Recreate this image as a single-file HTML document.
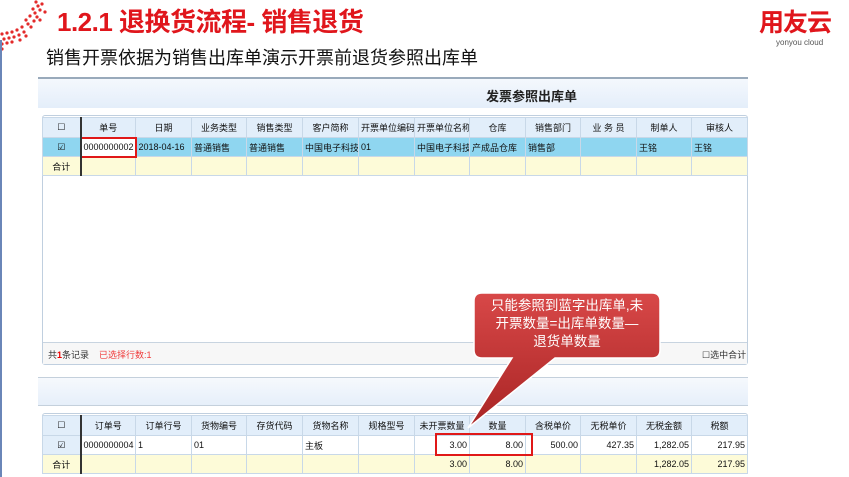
<!DOCTYPE html>
<html><head><meta charset="utf-8"><style>
*{margin:0;padding:0;box-sizing:border-box}
body{width:849px;height:477px;overflow:hidden;background:#fff;position:relative;font-family:"Liberation Sans","Noto Sans CJK SC",sans-serif}
.a{position:absolute}
table{border-collapse:collapse;table-layout:fixed;position:absolute;font-size:9px;font-family:"Liberation Sans","Noto Sans CJK SC",sans-serif}
td{border:1px solid #c8d8e8;height:19px;padding:0 2px;white-space:nowrap;overflow:hidden;color:#111}
tr.h td{background:#e2eefa;text-align:center;height:20px}
tr.d td{background:#8fd6f0}
tr.s td{background:#fdfbd8}
tr.w td{background:#fff}
td.c{text-align:center}
td.r{text-align:right}
td.l{border-right:2px solid #333}
</style></head><body>
<svg class="a" style="left:0;top:0" width="60" height="55">
<g fill="#e32a2a">
<circle cx="36" cy="2" r="1.6"/><circle cx="38" cy="6" r="1.6"/><circle cx="40" cy="10" r="1.6"/><circle cx="42" cy="4" r="1.6"/>
<circle cx="33" cy="9" r="1.6"/><circle cx="35" cy="13" r="1.6"/><circle cx="30" cy="16" r="1.6"/><circle cx="26" cy="20" r="1.6"/>
<circle cx="28" cy="24" r="1.6"/><circle cx="22" cy="27" r="1.6"/><circle cx="17" cy="30" r="1.6"/><circle cx="12" cy="32" r="1.6"/>
<circle cx="7" cy="33" r="1.6"/><circle cx="2" cy="34" r="1.6"/><circle cx="4" cy="39" r="1.6"/><circle cx="9" cy="38" r="1.6"/>
<circle cx="14" cy="37" r="1.6"/><circle cx="19" cy="35" r="1.6"/><circle cx="24" cy="32" r="1.6"/><circle cx="31" cy="27" r="1.6"/>
<circle cx="34" cy="21" r="1.6"/><circle cx="37" cy="17" r="1.6"/><circle cx="2" cy="44" r="1.6"/><circle cx="7" cy="43" r="1.6"/>
<circle cx="12" cy="42" r="1.6"/><circle cx="2" cy="49" r="1.6"/><circle cx="45" cy="12" r="1.6"/><circle cx="40" cy="20" r="1.6"/>
<circle cx="20" cy="40" r="1.6"/><circle cx="26" cy="36" r="1.6"/>
</g></svg>
<div class="a" style="left:0;top:40px;width:2px;height:437px;background:#6a86b8"></div>
<div class="a" style="left:57px;top:6px;font-size:26px;line-height:32px;font-weight:bold;color:#e0161c;letter-spacing:-0.5px">1.2.1 退换货流程- 销售退货</div>
<div class="a" style="left:759px;top:8px;font-size:25px;line-height:30px;font-weight:bold;color:#e0161c;letter-spacing:-1px">用友云</div>
<div class="a" style="left:776px;top:38px;font-size:8px;line-height:10px;color:#555">yonyou cloud</div>
<div class="a" style="left:46px;top:46px;font-size:18px;line-height:24px;color:#111">销售开票依据为销售出库单演示开票前退货参照出库单</div>
<div class="a" style="left:38px;top:77px;width:710px;height:2px;background:#9ab"></div>
<div class="a" style="left:38px;top:79px;width:710px;height:29px;background:linear-gradient(#f4f8fd,#e4eefa)"></div>
<div class="a" style="left:486px;top:86px;font-size:13px;font-weight:bold;color:#222">发票参照出库单</div>
<div class="a" style="left:42px;top:115px;width:706px;height:250px;border:1px solid #c0cfdf;border-radius:3px;background:#fff"></div>
<table style="left:42px;top:117px;width:705px">
<colgroup><col style="width:38px"><col style="width:55px"><col style="width:56px"><col style="width:55px"><col style="width:56px"><col style="width:56px"><col style="width:56px"><col style="width:55px"><col style="width:56px"><col style="width:55px"><col style="width:56px"><col style="width:55px"><col style="width:56px"></colgroup>
<tr class="h"><td class="l">☐</td><td>单号</td><td>日期</td><td>业务类型</td><td>销售类型</td><td>客户简称</td><td>开票单位编码</td><td>开票单位名称</td><td>仓库</td><td>销售部门</td><td>业 务 员</td><td>制单人</td><td>审核人</td></tr>
<tr class="d"><td class="c l">☑</td><td style="background:#fff;border:2px solid #e01818">0000000002</td><td>2018-04-16</td><td>普通销售</td><td>普通销售</td><td>中国电子科技</td><td>01</td><td>中国电子科技</td><td>产成品仓库</td><td>销售部</td><td></td><td>王铭</td><td>王铭</td></tr>
<tr class="s"><td class="c l">合计</td><td></td><td></td><td></td><td></td><td></td><td></td><td></td><td></td><td></td><td></td><td></td><td></td></tr>
</table>
<div class="a" style="left:43px;top:342px;width:704px;height:22px;background:#f7f7f7;border-top:1px solid #c8d4e0"></div>
<div class="a" style="left:48px;top:348px;font-size:9px;color:#333">共<b style="color:#e00">1</b>条记录 &nbsp;&nbsp; <span style="color:#f03c3c">已选择行数:1</span></div>
<div class="a" style="left:702px;top:348px;font-size:9px;color:#333">☐选中合计</div>
<div class="a" style="left:38px;top:377px;width:710px;height:29px;background:linear-gradient(#f6f9fd,#e6effa);border-top:1px solid #c4d0dc;border-bottom:1px solid #c4d0dc"></div>
<div class="a" style="left:42px;top:413px;width:706px;height:60px;border:1px solid #c0cfdf;border-radius:3px"></div>
<table style="left:42px;top:415px;width:705px">
<colgroup><col style="width:38px"><col style="width:55px"><col style="width:56px"><col style="width:55px"><col style="width:56px"><col style="width:56px"><col style="width:56px"><col style="width:55px"><col style="width:56px"><col style="width:55px"><col style="width:56px"><col style="width:55px"><col style="width:56px"></colgroup>
<tr class="h"><td class="l">☐</td><td>订单号</td><td>订单行号</td><td>货物编号</td><td>存货代码</td><td>货物名称</td><td>规格型号</td><td>未开票数量</td><td>数量</td><td>含税单价</td><td>无税单价</td><td>无税金额</td><td>税额</td></tr>
<tr class="w"><td class="c l" style="background:#e2eefa">☑</td><td>0000000004</td><td>1</td><td>01</td><td></td><td>主板</td><td></td><td class="r">3.00</td><td class="r">8.00</td><td class="r">500.00</td><td class="r">427.35</td><td class="r">1,282.05</td><td class="r">217.95</td></tr>
<tr class="s"><td class="c l">合计</td><td></td><td></td><td></td><td></td><td></td><td></td><td class="r">3.00</td><td class="r">8.00</td><td></td><td></td><td class="r">1,282.05</td><td class="r">217.95</td></tr>
</table>
<div class="a" style="left:435px;top:433px;width:98px;height:23px;border:2px solid #e01818"></div>
<svg class="a" style="left:460px;top:290px" width="210" height="145">
<defs><linearGradient id="g" x1="0" y1="0" x2="0" y2="1"><stop offset="0" stop-color="#d84848"/><stop offset="1" stop-color="#a82424"/></linearGradient></defs>
<path d="M22 3 Q14 3 14 11 L14 60 Q14 68 22 68 L52 68 L8 138 L95 68 L192 68 Q200 68 200 60 L200 11 Q200 3 192 3 Z" fill="url(#g)" stroke="#fff" stroke-width="1.5"/>
</svg>
<div class="a" style="left:474px;top:297px;width:186px;text-align:center;font-size:13.5px;line-height:18px;color:#fff;white-space:nowrap">只能参照到蓝字出库单,未<br>开票数量=出库单数量—<br>退货单数量</div>
</body></html>
